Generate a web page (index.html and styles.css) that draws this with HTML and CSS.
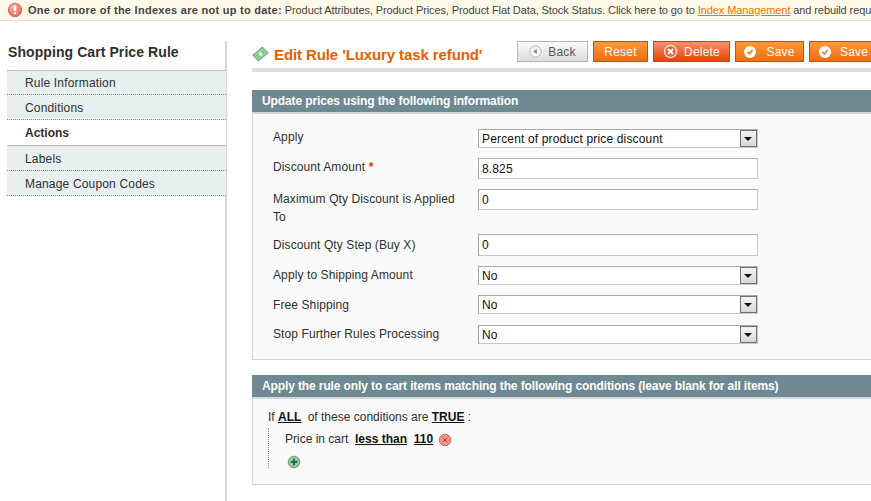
FILE: index.html
```html
<!DOCTYPE html>
<html lang="en">
<head>
<meta charset="utf-8">
<title>Edit Rule</title>
<link rel="stylesheet" href="styles.css">
</head>
<body>
<div class="notice">
  <svg class="notice-icon" width="16" height="16" viewBox="0 0 16 16"><defs><radialGradient id="r" cx=".4" cy=".3" r=".8"><stop offset="0" stop-color="#f9b3a6"/><stop offset="1" stop-color="#e0604f"/></radialGradient></defs><circle cx="8" cy="8" r="6.700" fill="url(#r)" stroke="#cf6a5c"/><rect x="6.800" y="3.500" width="2.400" height="5.500" fill="#fff"/><rect x="6.800" y="10" width="2.400" height="2.200" fill="#fff"/></svg>
  <span class="notice-text"><b>One or more of the Indexes are not up to date:</b> Product Attributes, Product Prices, Product Flat Data, Stock Status. Click here to go to <a href="#">Index Management</a> and rebuild required indexes.</span>
</div>
<div class="page">
  <aside class="side">
    <h3 class="side-title">Shopping Cart Price Rule</h3>
    <ul class="tabs">
      <li class="tab">Rule Information</li>
      <li class="tab">Conditions</li>
      <li class="tab active">Actions</li>
      <li class="tab">Labels</li>
      <li class="tab">Manage Coupon Codes</li>
    </ul>
  </aside>
  <main class="main">
    <div class="head">
      <div class="head-title">
        <svg class="money" width="17" height="16" viewBox="0 0 17 16"><path d="M.8 9.200 10.500 1l5.700 5.800L6.500 15z" fill="#84c48b" stroke="#6aa873"/><path d="M3 9.200 10.500 3l3.500 3.700L6.500 13z" fill="none" stroke="#b5e0b8" stroke-width=".8"/><circle cx="8.500" cy="8" r="2" fill="#e3f4e3"/></svg>
        <h3 class="title">Edit Rule 'Luxury task refund'</h3>
      </div>
      <div class="buttons">
        <button class="btn back"><svg width="13" height="13" viewBox="0 0 13 13"><circle cx="6.500" cy="6.500" r="5.700" fill="#f6f6f6" stroke="#b4b4b4"/><path d="M7.800 3.800v5.400L4.300 6.500z" fill="#8a8a8a"/></svg>Back</button>
        <button class="btn reset">Reset</button>
        <button class="btn del"><svg width="15" height="15" viewBox="0 0 15 15"><circle cx="7.500" cy="7.500" r="6" fill="#ee5f3e" stroke="#fbd9cc" stroke-width="1.500"/><path d="M5 5l5 5M10 5l-5 5" stroke="#fff" stroke-width="2"/></svg>Delete</button>
        <button class="btn save"><svg width="12" height="12" viewBox="0 0 12 12"><circle cx="6" cy="6" r="6" fill="#fff"/><path d="M3.500 6l2 2 3-4" fill="none" stroke="#f07a20" stroke-width="1.600"/></svg>Save</button>
        <button class="btn save"><svg width="12" height="12" viewBox="0 0 12 12"><circle cx="6" cy="6" r="6" fill="#fff"/><path d="M3.500 6l2 2 3-4" fill="none" stroke="#f07a20" stroke-width="1.600"/></svg>Save and Continue Edit</button>
      </div>
    </div>

    <section class="panel first">
      <h4 class="panel-head">Update prices using the following information</h4>
      <div class="form">
        <label class="lbl">Apply</label>
        <div class="sel"><span>Percent of product price discount</span><i class="arrow"></i></div>
        <label class="lbl down1">Discount Amount <em>*</em></label>
        <div class="inp">8.825</div>
        <label class="lbl down2 two-line">Maximum Qty Discount is Applied To</label>
        <div class="inp tall">0</div>
        <label class="lbl down3">Discount Qty Step (Buy X)</label>
        <div class="inp big">0</div>
        <label class="lbl down1">Apply to Shipping Amount</label>
        <div class="sel"><span>No</span><i class="arrow"></i></div>
        <label class="lbl down2">Free Shipping</label>
        <div class="sel"><span>No</span><i class="arrow"></i></div>
        <label class="lbl last">Stop Further Rules Processing</label>
        <div class="sel last-sel"><span>No</span><i class="arrow"></i></div>
      </div>
    </section>

    <section class="panel">
      <h4 class="panel-head">Apply the rule only to cart items matching the following conditions (leave blank for all items)</h4>
      <div class="rule">
        <p class="rule-line">If <a href="#">ALL</a> <span class="of">of these conditions are</span> <a href="#">TRUE</a> :</p>
        <div class="rule-children">
          <p class="rule-item">Price in cart &nbsp;<a href="#">less than</a> &nbsp;<a href="#">110</a>
            <svg class="rm" width="14" height="14" viewBox="0 0 14 14"><circle cx="7" cy="7" r="5.800" fill="#f29488" stroke="#dd6a5e"/><path d="M4.800 4.800l4.400 4.400M9.200 4.800l-4.400 4.400" stroke="#b8392e" stroke-width="1"/></svg></p>
          <svg class="add" width="14" height="14" viewBox="0 0 14 14"><circle cx="7" cy="7" r="5.800" fill="#9cc7a0" stroke="#6a9a72"/><path d="M7 3.800v6.400M3.800 7h6.400" stroke="#2f6a3a" stroke-width="2"/></svg>
        </div>
      </div>
    </section>
  </main>
</div>
</body>
</html>
```
FILE: styles.css
```css
* { box-sizing: border-box; }
html, body { margin: 0; height: 501px; overflow: hidden; background: #fff; }
body { font: 12px/18px "Liberation Sans", Arial, sans-serif; color: #2f2f2f; }
.notice { height: 21px; background: #fff9e9; border-bottom: 1px solid #eee2be; display: flex; align-items: center; padding: 0 0 1px 7px; gap: 5px; white-space: nowrap; overflow: hidden; font-size: 11px; color: #444; }
.notice-icon { flex: none; }
.notice-text { letter-spacing: -.1px; }
.notice-text b { color: #444; letter-spacing: .27px; }
.notice a { color: #ea7601; }
.page { display: flex; height: 480px; padding: 20px 0 0 7px; }
.side { width: 220px; flex: none; border-right: 2px solid #d6d6d6; }
.side-title { margin: 0; height: 29px; padding: 2px 0 0 1px; font-size: 14px; line-height: 18px; font-weight: bold; color: #2f2f2f; letter-spacing: .08px; }
.tabs { list-style: none; margin: 0; padding: 0; }
.tab { height: 25px; padding: 4px 0 0 18px; font-size: 12px; line-height: 18px; color: #2f2f2f; background: #e7efef; border-bottom: 1px dotted #7f8f8f; margin-right: -1px; letter-spacing: .17px; }
.tab:first-child { height: 25px; border-top: 1px solid #bbb; padding-top: 3px; }
.tab.active { background: #fff; font-weight: bold; height: 26px; border-bottom: 1px solid #bbb; padding-top: 4px; letter-spacing: 0; }
.main { flex: none; width: 1000px; margin-left: 25px; }
.head { display: flex; justify-content: space-between; width: 619px; height: 27px; border-bottom: 4px solid #dfdfdf; box-sizing: content-box; white-space: nowrap; overflow: hidden; }
.head-title { display: flex; align-items: flex-start; gap: 5px; padding-top: 5px; }
.money { flex: none; }
.title { margin: 0; font-size: 15px; line-height: 18px; font-weight: bold; color: #eb5e00; letter-spacing: -.1px; }
.buttons { display: flex; gap: 5px; flex: none; width: 354px; }
.btn { display: inline-flex; align-items: center; justify-content: center; flex: none; height: 21px; padding: 0; font: 12px/16px "Liberation Sans", Arial, sans-serif; color: #fff; border: 1px solid #b8561a; background: linear-gradient(#fa9a3c, #f06d10); gap: 6px; letter-spacing: .2px; }
.back { width: 71px; color: #555; border-color: #b5b5b5; background: linear-gradient(#fbfbfb, #dcdcdc); }
.reset { width: 55px; }
.del { width: 77px; border-color: #b84a20; background: linear-gradient(#f9906c, #e54405); }
.save { width: 69px; gap: 10px; }
.save:last-child { width: 180px; justify-content: flex-start; padding-left: 9px; gap: 9px; }
.panel { width: 1000px; }
.panel.first { margin-top: 18px; margin-bottom: 15px; }
.panel-head { margin: 0; height: 22px; background: #6f8992; color: #fff; font-size: 12px; line-height: 23px; font-weight: bold; padding-left: 10px; white-space: nowrap; letter-spacing: -.115px; }
.form { height: 248px; background: #fafafa; border: 1px solid #d6d6d6; border-top-width: 2px; padding: 15px 0 0 20px; display: grid; grid-template-columns: 205px 280px; grid-auto-rows: min-content; row-gap: 10px; align-items: start; }
.lbl { display: block; color: #2f2f2f; margin-top: -1px; padding-right: 20px; letter-spacing: .1px; }
.down1 { margin-top: 0; }
.down2 { margin-top: 1px; }
.down3 { margin-top: 2px; }
.two-line { margin-bottom: -10px; }
.last { margin-top: 1px; }
.last-sel { margin-top: 1px; }
.lbl em { color: #eb340a; font-style: normal; font-weight: bold; }
.sel { height: 19px; background: #fff; border: 1px solid #aaa; border-bottom-color: #c8c8c8; border-right-color: #c8c8c8; display: flex; align-items: center; justify-content: space-between; padding: 0 0 0 3px; color: #111; font-size: 12px; letter-spacing: .16px; }
.arrow { width: 17px; height: 17px; background: linear-gradient(#f4f4f4, #d8d8d8); border: 1px solid #707070; position: relative; }
.arrow::after { content: ""; position: absolute; left: 3px; top: 6px; border: 4px solid transparent; border-top: 4px solid #111; border-bottom: 0; }
.inp { height: 21px; background: #fff; border: 1px solid #aaa; border-bottom-color: #c8c8c8; border-right-color: #c8c8c8; padding: 0 0 0 3px; line-height: 20px; color: #111; font-size: 12px; letter-spacing: .13px; }
.inp.big { height: 22px; }
.inp.tall { margin-bottom: 14px; }
.rule { height: 88px; background: #fafafa; border: 1px solid #d6d6d6; border-top-width: 2px; padding: 7px 0 0 15px; }
.rule-line, .rule-item { margin: 0; color: #2f2f2f; }
.rule a { color: #111; font-weight: bold; text-decoration: underline; }
.rule-line { line-height: 22px; }
.of { margin-left: 3px; }
.rule-children { padding: 2px 0 0 16px; border-left: 1px dotted #888; height: 40px; }
.rule-item { line-height: 18px; }
.rm { vertical-align: -4px; margin-left: 2px; }
.add { display: block; margin: 7px 0 0 2px; }
```
